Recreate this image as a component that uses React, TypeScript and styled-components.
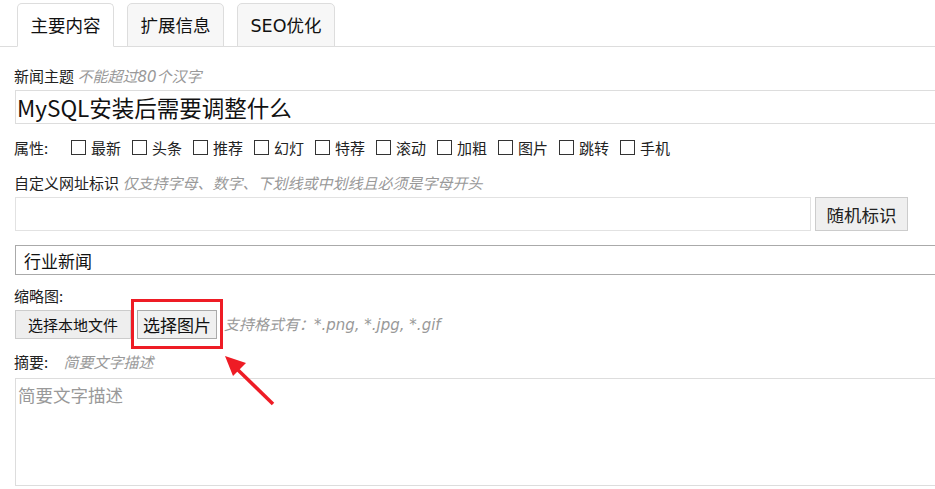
import React from 'react';
import styled, { createGlobalStyle } from 'styled-components';

const GlobalStyle = createGlobalStyle`
  html, body {
    margin: 0;
    padding: 0;
    overflow: hidden;
    background: #fff;
  }
  body {
    font-family: "Noto Sans CJK SC", "Noto Sans", sans-serif;
    color: #222;
  }
`;

const tabs = [
  { label: '主要内容', active: true },
  { label: '扩展信息', active: false },
  { label: 'SEO优化', active: false },
];

const attrs = ['最新', '头条', '推荐', '幻灯', '特荐', '滚动', '加粗', '图片', '跳转', '手机'];

const App = () => {
  return (
    <Page>
      <GlobalStyle />
      <TabBar>
        {tabs.map((t) => (
          <Tab key={t.label} $active={t.active}>
            {t.label}
          </Tab>
        ))}
      </TabBar>

      <Form>
        <Label $top={19}>
          新闻主题 <Hint>不能超过80个汉字</Hint>
        </Label>
        <TitleInput defaultValue="MySQL安装后需要调整什么" />

        <AttrRow>
          <AttrTitle>属性:</AttrTitle>
          {attrs.map((a) => (
            <AttrItem key={a}>
              <Check type="checkbox" />
              {a}
            </AttrItem>
          ))}
        </AttrRow>

        <Label $top={16}>
          自定义网址标识 <Hint>仅支持字母、数字、下划线或中划线且必须是字母开头</Hint>
        </Label>
        <UrlRow>
          <UrlInput />
          <GrayButton>随机标识</GrayButton>
        </UrlRow>

        <CategorySelect defaultValue="行业新闻">
          <option>行业新闻</option>
        </CategorySelect>

        <Label $top={11}>缩略图:</Label>
        <UploadRow>
          <FileButton>选择本地文件</FileButton>
          <Highlight>
            <PickButton>选择图片</PickButton>
          </Highlight>
          <Hint>支持格式有：*.png, *.jpg, *.gif</Hint>
        </UploadRow>

        <Label $top={13}>
          摘要: <SummaryHint>简要文字描述</SummaryHint>
        </Label>
        <Summary placeholder="简要文字描述" />
      </Form>

      <Arrow width="60" height="60" viewBox="0 0 60 60">
        <line x1="14" y1="15" x2="50" y2="50" stroke="#ee1c25" strokeWidth="3.5" />
        <polygon points="2,2 23,9 10,22" fill="#ee1c25" />
      </Arrow>
    </Page>
  );
};

export default App;

const Page = styled.div`
  position: relative;
  width: 980px;
  height: 489px;
`;

const TabBar = styled.div`
  display: flex;
  align-items: flex-end;
  gap: 13px;
  height: 47px;
  padding-left: 17px;
  box-sizing: border-box;
  border-bottom: 1px solid #ddd;
`;

const Tab = styled.div<{ $active: boolean }>`
  display: flex;
  align-items: center;
  justify-content: center;
  height: 44px;
  padding: 0 12.5px 2px;
  box-sizing: border-box;
  margin-bottom: -1px;
  border: 1px solid #ddd;
  border-bottom-color: ${(p) => (p.$active ? '#fff' : '#ddd')};
  border-radius: 5px 5px 0 0;
  background: ${(p) => (p.$active ? '#fff' : '#f7f7f7')};
  font-family: "DejaVu Sans", "Noto Sans CJK SC", sans-serif;
  font-size: 17.5px;
  color: #111;
`;

const Form = styled.div`
  display: flex;
  flex-direction: column;
  align-items: flex-start;
  padding-left: 15px;
`;

const Label = styled.div<{ $top: number }>`
  margin-top: ${(p) => p.$top}px;
  margin-left: -1px;
  height: 20px;
  font-size: 15px;
  line-height: 20px;
  color: #222;
  white-space: nowrap;
`;

const Hint = styled.span`
  font-family: "DejaVu Sans", "Noto Sans CJK SC", sans-serif;
  font-style: italic;
  font-size: 15px;
  line-height: 20px;
  color: #999;
`;

const SummaryHint = styled(Hint)`
  margin-left: 12px;
`;

const TitleInput = styled.input`
  margin-top: 4px;
  width: 960px;
  height: 34px;
  box-sizing: border-box;
  padding: 0 1px;
  border: 1px solid #ddd;
  outline: none;
  font-family: inherit;
  font-size: 22.5px;
  color: #111;
`;

const AttrRow = styled.div`
  display: flex;
  align-items: center;
  margin-top: 13px;
  margin-left: -1px;
  height: 20px;
  font-size: 15px;
  color: #222;
`;

const AttrTitle = styled.span`
  width: 57px;
`;

const AttrItem = styled.label`
  display: flex;
  align-items: center;
  width: 61px;
  white-space: nowrap;
`;

const Check = styled.input`
  appearance: none;
  width: 15px;
  height: 15px;
  margin: 0 5px 0 0;
  border: 1px solid #333;
  box-sizing: border-box;
  background: #fff;
`;

const UrlRow = styled.div`
  display: flex;
  gap: 4px;
  margin-top: 4px;
`;

const UrlInput = styled.input`
  width: 796px;
  height: 34px;
  box-sizing: border-box;
  border: 1px solid #e2e2e2;
  outline: none;
`;

const GrayButton = styled.button`
  width: 93px;
  height: 34px;
  box-sizing: border-box;
  border: 1px solid #ccc;
  background: #efefef;
  font-family: inherit;
  font-size: 17.5px;
  color: #222;
  padding: 0;
`;

const CategorySelect = styled.select`
  appearance: none;
  margin-top: 14px;
  width: 960px;
  height: 30px;
  box-sizing: border-box;
  padding: 0 8px;
  border: 1px solid #aaa;
  border-radius: 0;
  background: #fff;
  outline: none;
  font-family: inherit;
  font-size: 17px;
  color: #111;
`;

const UploadRow = styled.div`
  display: flex;
  align-items: center;
  gap: 6px;
  margin-top: 4px;
  height: 29px;
  white-space: nowrap;
`;

const FileButton = styled.button`
  width: 116px;
  height: 29px;
  box-sizing: border-box;
  padding: 0;
  border: 1px solid #ccc;
  background: #eee;
  font-family: inherit;
  font-size: 15px;
  color: #111;
`;

const Highlight = styled.span`
  position: relative;
  display: flex;
  margin-right: 1px;

  &::before {
    content: '';
    position: absolute;
    inset: -11px -6px -10px -6px;
    border: 3px solid #ee1c25;
    pointer-events: none;
  }
`;

const PickButton = styled.button`
  width: 80px;
  height: 29px;
  box-sizing: border-box;
  padding: 0;
  border: 1px solid #aaa;
  background: #f0f0f0;
  font-family: inherit;
  font-size: 17px;
  color: #111;
`;

const Summary = styled.textarea`
  margin-top: 6px;
  width: 960px;
  height: 108px;
  box-sizing: border-box;
  padding: 4px 2px;
  border: 1px solid #ddd;
  outline: none;
  resize: none;
  font-family: inherit;
  font-size: 17.5px;
  line-height: 24px;

  &::placeholder {
    color: #999;
  }
`;

const Arrow = styled.svg`
  position: absolute;
  left: 223px;
  top: 354px;
`;
